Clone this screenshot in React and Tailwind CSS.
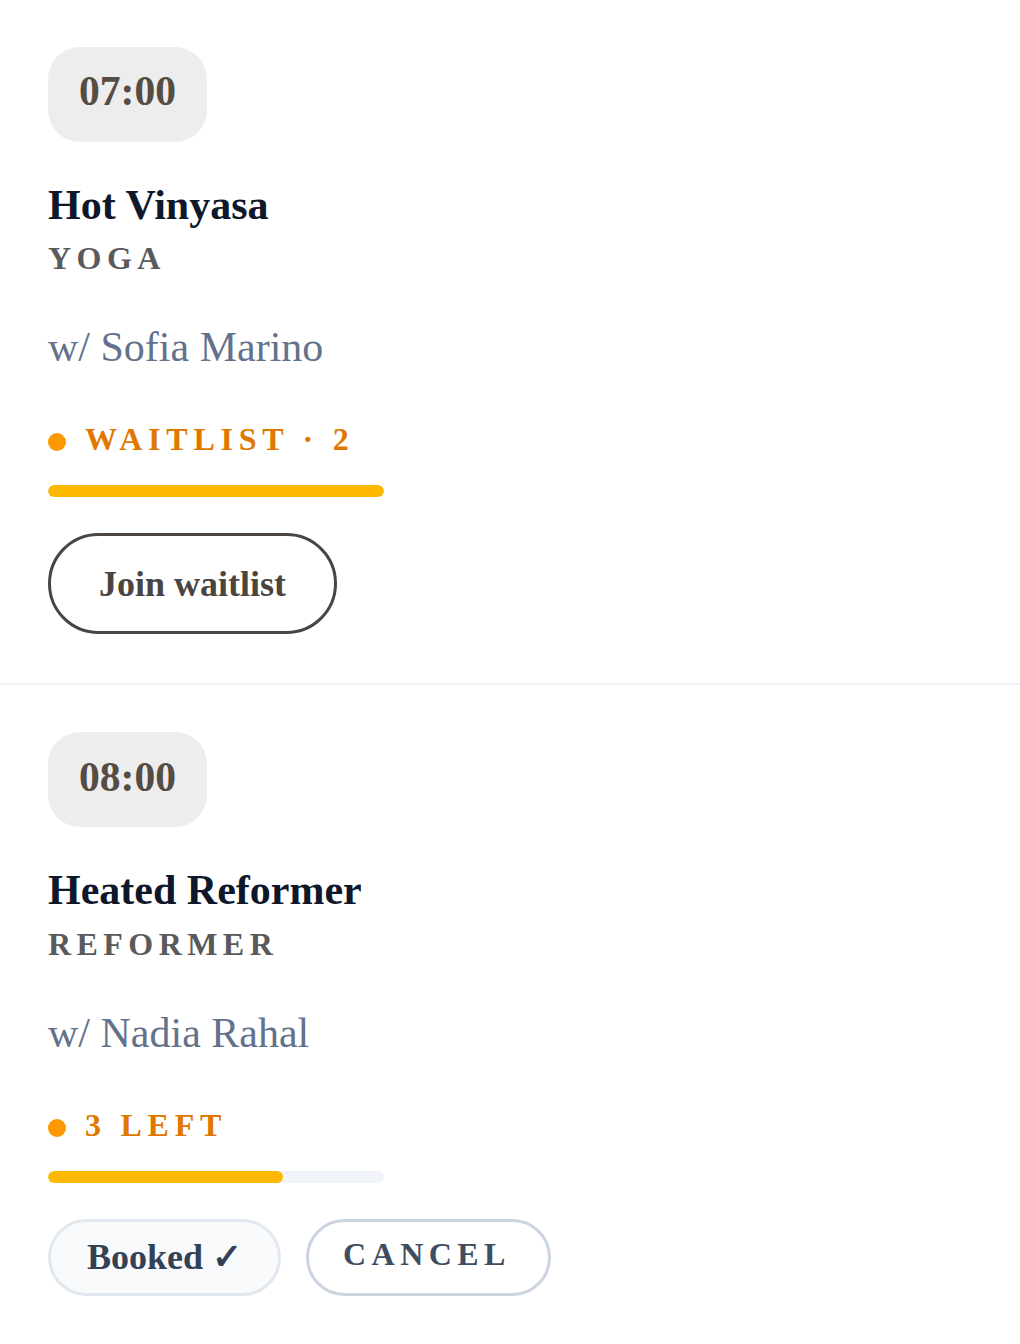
const CLASSES = [
  {
    id: 1,
    time: '07:00',
    name: 'Hot Vinyasa',
    type: 'YOGA',
    coach: 'Sofia Marino',
    status: 'WAITLIST · 2',
    fill: 100,
    booked: false,
  },
  {
    id: 2,
    time: '08:00',
    name: 'Heated Reformer',
    type: 'REFORMER',
    coach: 'Nadia Rahal',
    status: '3 LEFT',
    fill: 70,
    booked: true,
  },
];

function ClassRow({ c }) {
  return (
    <div className="border-b-2 border-[#eef2f6] px-12 pt-[47px] pb-[49px]">
      <div className="inline-flex h-[95px] items-center rounded-[32px] bg-[#ededed] px-[31px] pb-[5px]">
        <span className="text-[41.6px] font-bold leading-none text-[#554c44]">{c.time}</span>
      </div>

      <h3 className="mt-[38px] text-[42px] font-bold leading-[1.2] text-[#0f172a]">{c.name}</h3>
      <div className="mt-[4px] text-[32px] font-bold leading-[1.5] tracking-[0.17em] text-[#5a5a5c]">{c.type}</div>

      <p className="mt-[34px] text-[42px] leading-[1.5] text-[#63728c]">w/ {c.coach}</p>

      <div className="mt-[36px] flex items-center gap-[19px]">
        <span className="mt-[6px] h-[18px] w-[18px] rounded-full bg-[#ff9800]" />
        <span className="text-[32px] font-bold leading-[1.5] tracking-[0.18em] text-[#e07800]">{c.status}</span>
      </div>

      <div className="mt-[22px] h-3 w-[336px] overflow-hidden rounded-full bg-[#f1f5f9]">
        <div className="h-full rounded-full bg-[#ffb800]" style={{ width: `${c.fill}%` }} />
      </div>

      {c.booked ? (
        <div className="mt-[36px] flex gap-[25px]">
          <button className="flex h-[77px] items-center rounded-full border-[3px] border-[#e2e8f0] bg-[#f8fafc] px-[36px] text-[36px] font-bold leading-none text-[#334155]">
            Booked ✓
          </button>
          <button className="flex h-[77px] items-center rounded-full border-[3px] border-[#cbd5e1] bg-white pl-[34px] pr-[37px] pb-[6px] text-[32px] font-bold leading-none tracking-[0.17em] text-[#3f4d63]">
            CANCEL
          </button>
        </div>
      ) : (
        <button className="mt-[36px] flex h-[101px] items-center rounded-full border-[3px] border-[#4a4540] px-[48px] text-[36px] font-bold leading-none text-[#4a4540]">
          Join waitlist
        </button>
      )}
    </div>
  );
}

export default function App() {
  return (
    <div className="min-h-screen bg-white font-['Liberation_Serif','Times_New_Roman',serif]">
      {CLASSES.map(c => <ClassRow key={c.id} c={c} />)}
    </div>
  );
}
